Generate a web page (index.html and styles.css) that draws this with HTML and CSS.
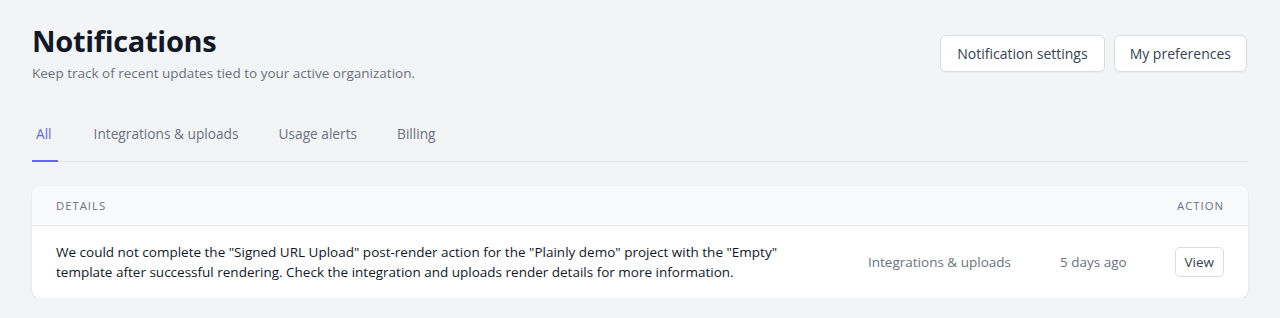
FILE: index.html
```html
<!DOCTYPE html>
<html lang="en">
<head>
<meta charset="utf-8">
<title>Notifications</title>
<link rel="stylesheet" href="styles.css">
</head>
<body>
<main class="page">
  <header class="page-header">
    <div class="heading">
      <h1 class="title">Notifications</h1>
      <p class="subtitle">Keep track of recent updates tied to your active organization.</p>
    </div>
    <div class="header-actions">
      <button class="btn">Notification settings</button>
      <button class="btn">My preferences</button>
    </div>
  </header>

  <nav class="tabs">
    <a class="tab tab-active">All</a>
    <a class="tab">Integrations &amp; uploads</a>
    <a class="tab">Usage alerts</a>
    <a class="tab">Billing</a>
  </nav>

  <section class="card">
    <div class="card-head">
      <span class="col-details">Details</span>
      <span class="col-action">Action</span>
    </div>
    <div class="row">
      <p class="row-text">We could not complete the "Signed URL Upload" post-render action for the "Plainly demo" project with the "Empty" template after successful rendering. Check the integration and uploads render details for more information.</p>
      <span class="row-category">Integrations &amp; uploads</span>
      <span class="row-time">5 days ago</span>
      <span class="row-action"><button class="btn-sm">View</button></span>
    </div>
  </section>
</main>
</body>
</html>
```

FILE: styles.css
```css
* { box-sizing: border-box; }
html, body { margin: 0; padding: 0; }
body {
  background: #f3f4f6;
  font-family: "Open Sans", "Noto Sans", sans-serif;
  color: #111827;
}
.page {
  padding: 22px 32px 0 32px;
}
.page-header {
  display: flex;
  justify-content: space-between;
  align-items: flex-start;
}
.title {
  margin: 0;
  font-size: 29px;
  line-height: 38px;
  font-weight: 700;
  color: #111827;
  letter-spacing: -0.3px;
}
.subtitle {
  margin: 4px 0 0 0;
  font-size: 13.5px;
  line-height: 18px;
  color: #6b7280;
}
.header-actions {
  display: flex;
  gap: 9px;
  margin-top: 13px;
  margin-right: 1px;
}
.btn {
  font-family: inherit;
  font-size: 14px;
  color: #374151;
  background: #fff;
  border: 1px solid #d9dce1;
  border-radius: 6px;
  height: 37px;
  padding: 0 16px;
  box-shadow: 0 1px 2px rgba(0,0,0,0.04);
}
.btn + .btn { padding: 0 15px; }
.tabs {
  display: flex;
  gap: 32px;
  margin-top: 36px;
  border-bottom: 1px solid #e5e7eb;
}
.tab {
  font-size: 13.7px;
  line-height: 20px;
  color: #6b7280;
  padding: 6px 4px 16px 4px;
  border-bottom: 2px solid transparent;
  margin-bottom: -1px;
}
.tab-active {
  color: #6366f1;
  border-bottom-color: #6366f1;
  padding: 6px 6px 16px 4px;
}
.card {
  margin-top: 24px;
  background: #fff;
  border-radius: 8px;
  box-shadow: 0 1px 3px rgba(0,0,0,0.08), 0 1px 2px rgba(0,0,0,0.04);
  overflow: hidden;
}
.card-head {
  display: flex;
  justify-content: space-between;
  align-items: center;
  height: 40px;
  padding: 0 24px;
  background: #f9fafb;
  border-bottom: 1px solid #e5e7eb;
  font-size: 11.3px;
  letter-spacing: 1px;
  text-transform: uppercase;
  color: #6b7280;
}
.row {
  display: flex;
  align-items: center;
  padding: 16px 24px 16px 24px;
}
.row-text {
  flex: none;
  margin: 0;
  width: 760px;
  font-size: 13.5px;
  line-height: 20px;
  color: #111827;
}
.row-category {
  margin-left: 52px;
  font-size: 13.5px;
  color: #6b7280;
}
.row-time {
  margin-left: 49px;
  font-size: 13.5px;
  color: #6b7280;
}
.row-action {
  margin-left: auto;
}
.btn-sm {
  font-family: inherit;
  font-size: 13.5px;
  color: #374151;
  background: #fff;
  border: 1px solid #d9dce1;
  border-radius: 5px;
  height: 30px;
  padding: 0 9px;
}
```
